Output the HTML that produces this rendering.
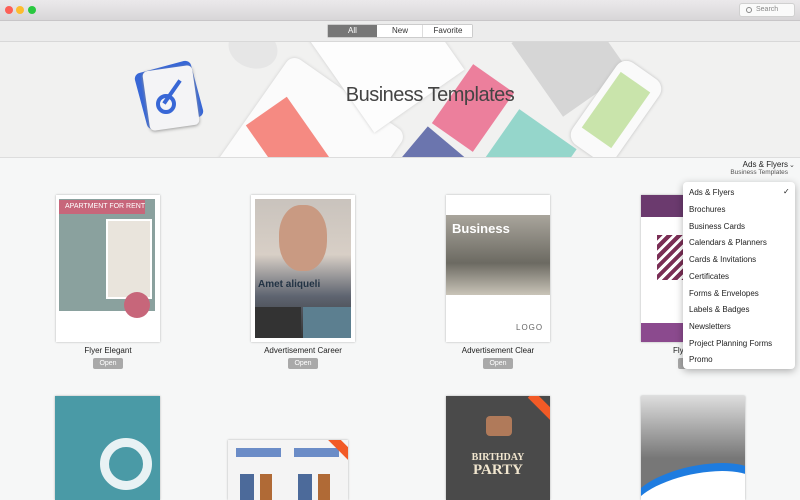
<!DOCTYPE html>
<html style="width:800px;height:500px;overflow:hidden"><head><meta charset="utf-8"><style>
*{margin:0;padding:0;box-sizing:border-box}
body{width:800px;height:500px;overflow:hidden;background:#f6f7f7;font-family:"Liberation Sans",sans-serif;position:relative}
.a{position:absolute}
.tb{left:0;top:0;width:800px;height:21px;background:linear-gradient(#ebe9eb,#d8d6d8);border-bottom:1px solid #c8c6c8}
.dot{width:8px;height:8px;border-radius:50%;top:6px}
.tool{left:0;top:21px;width:800px;height:21px;background:#ececec;border-bottom:1px solid #d8d8d8}
.seg{top:25px;height:12px;font-size:8px;text-align:center;line-height:12px;color:#333;background:#fff}
.ban{left:0;top:42px;width:800px;height:116px;background:#f1f1f0;overflow:hidden;border-bottom:1px solid #ddd}
.th{background:#fff;box-shadow:0 0 2px rgba(0,0,0,.3);overflow:hidden}
.lbl{font-size:8px;color:#222;text-align:center;width:160px}
.btn{width:30px;height:11px;background:#a9a9a9;border-radius:2px;color:#fff;font-size:7px;text-align:center;line-height:11px}
.menu{left:683px;top:182px;width:112px;height:187px;background:#fff;border-radius:4px;box-shadow:0 2px 8px rgba(0,0,0,.3)}
.menu div{position:absolute;left:6px;font-size:8px;color:#222}
</style></head><body>
<div class="a tb"></div>
<div class="a dot" style="left:5px;background:#fc5f57"></div>
<div class="a dot" style="left:16px;background:#fdbc2e"></div>
<div class="a dot" style="left:28px;background:#2ac840"></div>
<div class="a" style="left:739px;top:3px;width:56px;height:14px;background:#fafafa;border:1px solid #d0d0d0;border-radius:3px;font-size:7px;color:#888;line-height:12px;padding-left:16px">Search<span class="a" style="left:6px;top:3px;width:6px;height:6px;border:1px solid #888;border-radius:50%"></span></div>
<div class="a tool"></div>
<div class="a" style="left:327px;top:24px;width:146px;height:14px;border:1px solid #ccc;border-radius:2px;background:#fff"></div>
<div class="a seg" style="left:328px;width:49px;background:#777;color:#fff">All</div>
<div class="a seg" style="left:378px;width:45px;border-right:1px solid #ddd">New</div>
<div class="a seg" style="left:424px;width:48px">Favorite</div>
<div class="a ban">
 <div class="a" style="left:228px;top:-14px;width:50px;height:40px;background:#e6e6e6;border-radius:50%;transform:rotate(20deg)"></div>
 <div class="a" style="left:200px;top:60px;width:190px;height:140px;background:#fbfbfb;border-radius:10px;transform:rotate(-55deg);box-shadow:0 0 3px #ccc"></div>
 <div class="a" style="left:270px;top:60px;width:50px;height:100px;background:#f58a82;transform:rotate(-35deg)"></div>
 <div class="a" style="left:330px;top:-50px;width:110px;height:120px;background:#fdfdfd;transform:rotate(-35deg);box-shadow:0 0 3px #ccc"></div>
 <div class="a" style="left:530px;top:-30px;width:80px;height:90px;background:#d6d6d6;transform:rotate(-35deg)"></div>
 <div class="a" style="left:448px;top:30px;width:50px;height:72px;background:#ec7f9c;transform:rotate(35deg)"></div>
 <div class="a" style="left:405px;top:95px;width:52px;height:52px;background:#6b75ae;transform:rotate(40deg)"></div>
 <div class="a" style="left:490px;top:80px;width:70px;height:80px;background:#95d6cb;transform:rotate(35deg)"></div>
 <div class="a" style="left:590px;top:20px;width:52px;height:100px;background:#fafafa;border-radius:12px;transform:rotate(35deg);box-shadow:0 0 3px #bbb"></div>
 <div class="a" style="left:598px;top:34px;width:36px;height:68px;background:#c9e4ab;transform:rotate(35deg)"></div>
 <div class="a" style="left:140px;top:24px;width:58px;height:58px;background:#3867d6;border-radius:6px;transform:rotate(-15deg)"></div>
 <div class="a" style="left:146px;top:26px;width:50px;height:60px;background:#f4f4f6;border-radius:5px;transform:rotate(-8deg);box-shadow:0 1px 3px #999"></div>
 <div class="a" style="left:156px;top:52px;width:20px;height:20px;border:4px solid #3867d6;border-radius:50%"></div>
 <div class="a" style="left:170px;top:36px;width:4px;height:28px;background:#3867d6;transform:rotate(35deg)"></div>
 <div class="a" style="left:330px;top:42px;width:200px;text-align:center;font-size:20px;color:#444;letter-spacing:-.5px">Business Templates</div>
</div>
<div class="a" style="left:700px;top:160px;width:88px;text-align:right;font-size:8px;color:#222">Ads &amp; Flyers</div>
<div class="a" style="left:700px;top:169px;width:88px;text-align:right;font-size:6.5px;color:#555">Business Templates</div>
<div class="a" style="left:789px;top:161px;font-size:7px;color:#444">⌄</div>

<div class="a th" style="left:56px;top:195px;width:104px;height:147px">
 <div class="a" style="left:3px;top:4px;width:96px;height:112px;background:#8aa19e"></div>
 <div class="a" style="left:3px;top:5px;width:86px;height:14px;background:#c7667a;color:#fff;font-size:7px;line-height:14px;padding-left:6px;white-space:nowrap">APARTMENT FOR RENT</div>
 <div class="a" style="left:50px;top:24px;width:46px;height:80px;background:#e9e4dc;border:2px solid #fff"></div>
 <div class="a" style="left:68px;top:97px;width:26px;height:26px;background:#c7667a;border-radius:50%"></div>
</div>
<div class="a th" style="left:251px;top:195px;width:104px;height:147px">
 <div class="a" style="left:4px;top:4px;width:96px;height:139px;background:linear-gradient(#c9c3bd,#d8cfc6 40%,#5e6470 70%,#333)"></div>
 <div class="a" style="left:28px;top:10px;width:48px;height:66px;background:#c99a82;border-radius:45%"></div>
 <div class="a" style="left:7px;top:84px;font-size:10px;font-weight:bold;color:#234">Amet aliqueli</div>
 <div class="a" style="left:4px;top:112px;width:46px;height:31px;background:#333"></div>
 <div class="a" style="left:52px;top:112px;width:48px;height:31px;background:#5c7f90"></div>
</div>
<div class="a th" style="left:446px;top:195px;width:104px;height:147px">
 <div class="a" style="left:0;top:20px;width:104px;height:80px;background:linear-gradient(#a9a59c,#6c6a62 60%,#c9c4b8)"></div>
 <div class="a" style="left:6px;top:26px;font-size:13px;font-weight:bold;color:#fff">Business</div>
 <div class="a" style="left:70px;top:128px;font-size:8px;color:#666;letter-spacing:1px">LOGO</div>
</div>
<div class="a th" style="left:641px;top:195px;width:42px;height:147px">
 <div class="a" style="left:0;top:0;width:42px;height:22px;background:#6b3a6e"></div>
 <div class="a" style="left:16px;top:40px;width:30px;height:45px;background:repeating-linear-gradient(-45deg,#7a2e55 0 4px,#fff 4px 7px)"></div>
 <div class="a" style="left:0;top:128px;width:42px;height:20px;background:#8b4a8e"></div>
</div>

<div class="a lbl" style="left:28px;top:346px">Flyer Elegant</div>
<div class="a lbl" style="left:223px;top:346px">Advertisement Career</div>
<div class="a lbl" style="left:418px;top:346px">Advertisement Clear</div>
<div class="a" style="left:673px;top:346px;font-size:8px;color:#222">Fly</div>
<div class="a btn" style="left:93px;top:358px">Open</div>
<div class="a btn" style="left:288px;top:358px">Open</div>
<div class="a btn" style="left:483px;top:358px">Open</div>
<div class="a btn" style="left:678px;top:358px"></div>

<div class="a menu">
 <div style="top:6px">Ads &amp; Flyers</div><div style="top:5px;left:100px">✓</div>
 <div style="top:23px">Brochures</div>
 <div style="top:40px">Business Cards</div>
 <div style="top:56px">Calendars &amp; Planners</div>
 <div style="top:73px">Cards &amp; Invitations</div>
 <div style="top:90px">Certificates</div>
 <div style="top:107px">Forms &amp; Envelopes</div>
 <div style="top:123px">Labels &amp; Badges</div>
 <div style="top:140px">Newsletters</div>
 <div style="top:157px">Project Planning Forms</div>
 <div style="top:173px">Promo</div>
</div>

<div class="a th" style="left:55px;top:396px;width:105px;height:104px;background:#4a9aa6">
 <div class="a" style="left:45px;top:42px;width:52px;height:52px;border:9px solid #e8f2f4;border-radius:50%"></div>
</div>
<div class="a th" style="left:228px;top:440px;width:120px;height:60px;background:#f4f4f4">
 <div class="a" style="left:8px;top:8px;width:45px;height:9px;background:#6b8cc7"></div>
 <div class="a" style="left:66px;top:8px;width:45px;height:9px;background:#6b8cc7"></div>
 <div class="a" style="left:12px;top:34px;width:14px;height:30px;background:#4c6a9a"></div>
 <div class="a" style="left:70px;top:34px;width:14px;height:30px;background:#4c6a9a"></div>
 <div class="a" style="left:32px;top:34px;width:12px;height:30px;background:#b06a36"></div>
 <div class="a" style="left:90px;top:34px;width:12px;height:30px;background:#b06a36"></div>
 <div class="a" style="left:98px;top:4px;width:34px;height:9px;background:#f25a26;transform:rotate(45deg)"></div>
</div>
<div class="a th" style="left:446px;top:396px;width:104px;height:104px;background:#4a4a4a">
 <div class="a" style="left:40px;top:20px;width:26px;height:20px;background:#b07a5a;border-radius:4px"></div>
 <div class="a" style="left:0;top:56px;width:104px;text-align:center;font-size:10px;color:#f1e6cf;font-family:'Liberation Serif',serif;font-weight:bold">BIRTHDAY</div>
 <div class="a" style="left:0;top:66px;width:104px;text-align:center;font-size:15px;color:#f1e6cf;font-family:'Liberation Serif',serif;font-weight:bold">PARTY</div>
 <div class="a" style="left:80px;top:6px;width:34px;height:9px;background:#f25a26;transform:rotate(45deg)"></div>
</div>
<div class="a th" style="left:641px;top:396px;width:104px;height:104px;background:linear-gradient(#ddd,#777 60%)">
 <div class="a" style="left:-10px;top:70px;width:130px;height:50px;background:#1e7ce0;border-radius:50% 50% 0 0;transform:rotate(-12deg)"></div>
 <div class="a" style="left:-10px;top:78px;width:130px;height:50px;background:#fff;border-radius:50% 50% 0 0;transform:rotate(-12deg)"></div>
</div>
</body></html>
